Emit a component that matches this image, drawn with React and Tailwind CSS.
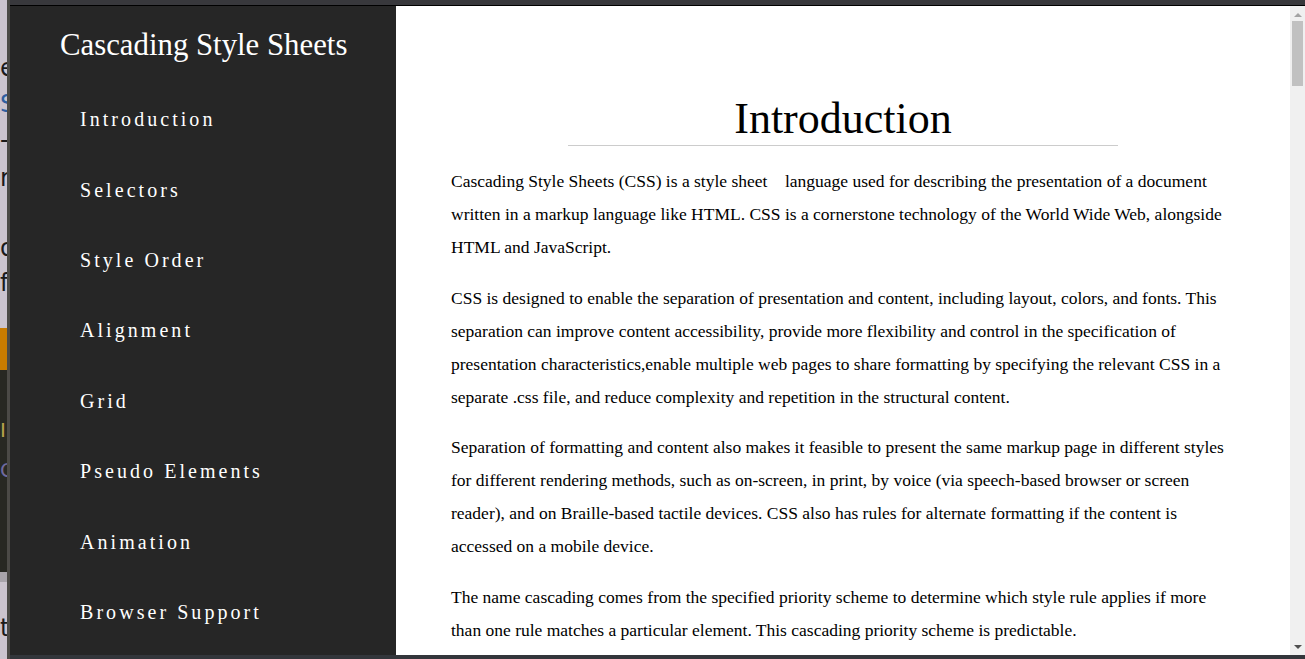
export default function App() {
  const nav = [
    "Introduction",
    "Selectors",
    "Style Order",
    "Alignment",
    "Grid",
    "Pseudo Elements",
    "Animation",
    "Browser Support",
  ];
  return (
    <div className="w-[1305px] h-[659px] flex overflow-hidden bg-[#cbc4ce]">
      {/* background window peeking at left */}
      <div className="w-[7px] h-full flex flex-col overflow-hidden font-['DejaVu_Sans',sans-serif] text-[24px] leading-none">
        <div className="h-[50px] shrink-0" />
        <div className="h-[35px] shrink-0 flex items-center text-[#1a1a1a] whitespace-nowrap">e</div>
        <div className="h-[37px] shrink-0 flex items-center text-[#2f5fa0] whitespace-nowrap">Sl</div>
        <div className="h-[36px] shrink-0 flex items-center text-[#1a1a1a] whitespace-nowrap">-</div>
        <div className="h-[40px] shrink-0 flex items-center text-[#1a1a1a] whitespace-nowrap">r</div>
        <div className="h-[32px] shrink-0" />
        <div className="h-[35px] shrink-0 flex items-center text-[#1a1a1a] whitespace-nowrap">o</div>
        <div className="h-[35px] shrink-0 flex items-center text-[#1a1a1a] whitespace-nowrap">f</div>
        <div className="h-[28px] shrink-0" />
        <div className="h-[42px] shrink-0 bg-[#c97c00]" />
        <div className="h-[202px] shrink-0 bg-[#272822] flex flex-col text-[20px]">
          <div className="h-[40px]" />
          <div className="h-[40px] flex items-center text-[#b7a24a] whitespace-nowrap">I</div>
          <div className="h-[40px] flex items-center text-[#6f6aa0] whitespace-nowrap">C</div>
        </div>
        <div className="h-[10px] shrink-0 bg-[#a8a4aa]" />
        <div className="h-[30px] shrink-0" />
        <div className="h-[32px] shrink-0 flex items-center text-[#1a1a1a] whitespace-nowrap">t</div>
      </div>
      <div className="w-[3px] h-full bg-[#4b4a46]" />

      {/* window */}
      <div className="flex-1 h-full flex flex-col">
        <div className="h-[6px] shrink-0 bg-[#38383c] border-b border-black" />
        <div className="flex-1 flex min-h-0">
          {/* sidebar */}
          <div className="w-[386px] shrink-0 bg-[#262626] text-white font-['Liberation_Serif',serif] flex flex-col">
            <div className="h-[78px] shrink-0 flex items-center pl-[50px] text-[30.8px]">
              Cascading Style Sheets
            </div>
            {nav.map((n) => (
              <div
                key={n}
                className="h-[70.4px] shrink-0 flex items-center pl-[70px] text-[20px] tracking-[3.05px]"
              >
                {n}
              </div>
            ))}
          </div>

          {/* content */}
          <div className="flex-1 bg-white overflow-hidden px-[55px] pt-[88px] text-black font-['Liberation_Serif',serif]">
            <h1 className="w-[550px] mx-auto text-center text-[44px] leading-[50px] pb-[1px] border-b border-[#cccccc]">
              Introduction
            </h1>
            <div className="mt-[19px] text-[17.5px] leading-[33px] flex flex-col gap-[17.5px]">
              <p>
                Cascading Style Sheets (CSS) is a style sheet{"\u00a0\u00a0\u00a0"} language used for
                describing the presentation of a document written in a markup language like HTML. CSS is a
                cornerstone technology of the World Wide Web, alongside HTML and JavaScript.
              </p>
              <p>
                CSS is designed to enable the separation of presentation and content, including layout,
                colors, and fonts. This separation can improve content accessibility, provide more
                flexibility and control in the specification of presentation characteristics,enable
                multiple web pages to share formatting by specifying the relevant CSS in a separate .css
                file, and reduce complexity and repetition in the structural content.
              </p>
              <p>
                Separation of formatting and content also makes it feasible to present the same markup page
                in different styles for different rendering methods, such as on-screen, in print, by voice
                (via speech-based browser or screen reader), and on Braille-based tactile devices. CSS also
                has rules for alternate formatting if the content is accessed on a mobile device.
              </p>
              <p>
                The name cascading comes from the specified priority scheme to determine which style rule
                applies if more than one rule matches a particular element. This cascading priority scheme
                is predictable.
              </p>
            </div>
          </div>

          {/* scrollbar */}
          <div className="w-[15px] shrink-0 bg-[#f0f0f0] flex flex-col items-center">
            <div className="h-[15px] shrink-0 flex items-center justify-center pt-[2px]">
              <div className="w-0 h-0 border-l-[4px] border-r-[4px] border-b-[4px] border-l-transparent border-r-transparent border-b-[#a3a3a3]" />
            </div>
            <div className="w-[11px] h-[65px] bg-[#c1c1c1]" />
            <div className="flex-1" />
            <div className="h-[15px] shrink-0 flex items-center justify-center pb-[2px]">
              <div className="w-0 h-0 border-l-[4px] border-r-[4px] border-t-[4px] border-l-transparent border-r-transparent border-t-[#505050]" />
            </div>
          </div>
        </div>
        <div className="h-[4px] shrink-0 bg-[#33363b]" />
      </div>
    </div>
  );
}
